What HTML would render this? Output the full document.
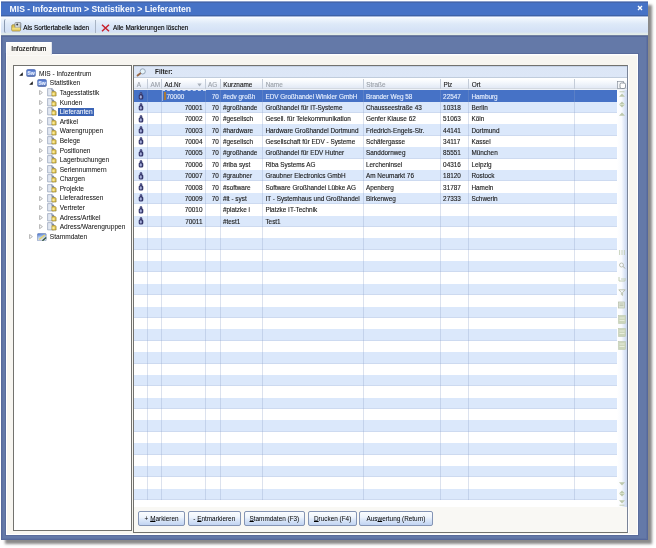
<!DOCTYPE html>
<html><head><meta charset="utf-8"><title>MIS - Infozentrum</title>
<style>
*{margin:0;padding:0;box-sizing:border-box}
html,body{width:656px;height:548px;overflow:hidden;background:#fff}
body{position:relative;font-family:"Liberation Sans",sans-serif;font-size:6.4px;color:#000}
.a{position:absolute}
.t{position:absolute;white-space:nowrap;line-height:1;-webkit-text-stroke:0.12px currentColor}
#win{position:absolute;left:1px;top:1px;width:647px;height:538.5px;background:#6479a8;box-shadow:inset 0 0 0 1px #56689a,inset 0 0 0 2px #5e72a2,3.5px 3.5px 2.5px rgba(60,60,60,.6)}
#title{left:0;top:0;width:647px;height:16px;background:linear-gradient(#8a9ecb 0,#8a9ecb 1px,#4466ac 1px,#4466ac 2px,#4672c6 2px,#4672c6 14px,#3e62a6 14px,#3e62a6 15px,#a4b6da 15px)}
#tbar{left:0;top:16px;width:647px;height:19px;background:linear-gradient(#fdfeff 0,#f0f6fd 1.5px,#dde9f8 7px,#d3e0f5 15px,#e4ede8 17px,#e4ede8 17.5px,#7080a0 18px)}
#panel{left:6px;top:54px;width:632px;height:481px;box-shadow:0 0 0 1px #5a6c9c;background:linear-gradient(#fcfbf9 0,#f7f5f0 1.5px);border-top:1px solid #fff;border-left:1px solid #fff;border-right:1px solid #fff;border-bottom:1px solid #fff}
#tree{left:13px;top:65px;width:119px;height:466px;background:#fff;border:1px solid #72726e}
#gp{left:133px;top:65px;width:495px;height:468px;background:#f9f8f4;border:1px solid #72726e;border-right-color:#7a8498;box-shadow:1px 0 0 #fff}
.row{position:absolute;left:0;height:11.4px}
.btn{position:absolute;top:511px;height:15px;border:1px solid #8494b4;border-radius:2px;background:linear-gradient(#fbfdff 0,#eef4fc 40%,#dae6f8 62%,#c2d4f2 100%);color:#000;text-align:center}
.btn span{position:absolute;left:0;right:0;top:4.1px;line-height:1}
u{text-decoration:underline;text-decoration-thickness:0.5px;text-underline-offset:0.4px}
</style></head><body style="will-change:transform">
<div id="win">
<div id="title" class="a"></div>
<div class="t" style="left:8.6px;top:3.8px;font-size:8.6px;font-weight:bold;color:#f8faff;-webkit-text-stroke:0">MIS - Infozentrum &gt; Statistiken &gt; Lieferanten</div>
<svg class="a" style="left:636px;top:4.3px" width="6" height="6" viewBox="0 0 6 6"><path d="M1 1L5 5M5 1L1 5" stroke="#fff" stroke-width="1.4"/></svg>
<div id="tbar" class="a"></div>
</div>

<div class="a" style="left:4px;top:19.3px;width:2px;height:14px;border-left:1px solid #8a9ab0;border-top-left-radius:2px;border-bottom-left-radius:2px"></div>
<svg class="a" style="left:11px;top:21.8px" width="11" height="10" viewBox="0 0 11 10">
<defs><linearGradient id="tby" x1="0" y1="0" x2="0" y2="1"><stop offset="0" stop-color="#e6cc58"/><stop offset="1" stop-color="#d0b038"/></linearGradient><linearGradient id="tbd" x1="0" y1="0" x2="1" y2="1"><stop offset="0" stop-color="#ffffff"/><stop offset="1" stop-color="#a8b0b4"/></linearGradient></defs>
<rect x="0.8" y="2.8" width="8.6" height="6.2" rx="0.9" fill="url(#tby)" stroke="#8c7a30" stroke-width="0.7"/>
<rect x="4" y="0.6" width="5.8" height="5.4" rx="0.6" fill="url(#tbd)" stroke="#687078" stroke-width="0.7"/>
<circle cx="6.2" cy="2.6" r="1" fill="#2c3438"/>
<path d="M1.2 5.6H9V8.6H1.2Z" fill="#f2de7c"/>
<path d="M1.2 8.2H9" stroke="#c0a040" stroke-width="0.6"/>
</svg>
<div class="t" style="left:23.3px;top:24.6px">Als Sortiertabelle laden</div>
<div class="a" style="left:95px;top:19.5px;width:1px;height:13.5px;background:#a8b4c4"></div>
<svg class="a" style="left:100.5px;top:23.5px" width="9" height="8" viewBox="0 0 9 8"><path d="M1 0.8L8 7.2M8 0.8L1 7.2" stroke="#c8202a" stroke-width="1.5"/></svg>
<div class="t" style="left:113px;top:24.6px">Alle Markierungen löschen</div>

<div id="panel" class="a"></div>
<div class="a" style="left:1px;top:36px;width:647px;height:1px;background:#56689a"></div>
<div class="a" style="left:6px;top:42px;width:46px;height:13px;background:linear-gradient(#fdfdfb,#f7f5f0);border-top:1px solid #fff;border-left:1px solid #fff;border-right:1px solid #e0e4ec;border-top-left-radius:1px;border-top-right-radius:1px"></div>
<div class="t" style="left:11.3px;top:46px;font-size:6.65px">Infozentrum</div>

<div id="tree" class="a"></div>
<svg class="a" style="left:19.4px;top:71.7px" width="4" height="4" viewBox="0 0 4 4"><path d="M3.8 0.2V3.8H0.2Z" fill="#1c1c1c"/></svg>
<svg class="a" style="left:26.2px;top:69.4px" width="10" height="8" viewBox="0 0 10 8"><defs><linearGradient id="gm0" x1="0" y1="0" x2="0" y2="1"><stop offset="0" stop-color="#3e62c0"/><stop offset="0.5" stop-color="#88a8e4"/><stop offset="1" stop-color="#4a64a8"/></linearGradient></defs><rect x="0.3" y="0.3" width="9.4" height="7.4" rx="2.2" fill="url(#gm0)" stroke="#5a70a8" stroke-width="0.5"/><text x="1.4" y="6.1" font-size="5" font-family="Liberation Sans" font-weight="bold" fill="#eef2ff">Sw</text></svg>
<div class="t" style="left:38.9px;top:70.9px;font-size:6.6px;color:#111;-webkit-text-stroke:0.03px #111">MIS - Infozentrum</div>
<svg class="a" style="left:29.3px;top:81.28px" width="4" height="4" viewBox="0 0 4 4"><path d="M3.8 0.2V3.8H0.2Z" fill="#1c1c1c"/></svg>
<svg class="a" style="left:36.6px;top:78.98px" width="10" height="8" viewBox="0 0 10 8"><defs><linearGradient id="gm1" x1="0" y1="0" x2="0" y2="1"><stop offset="0" stop-color="#3e62c0"/><stop offset="0.5" stop-color="#88a8e4"/><stop offset="1" stop-color="#4a64a8"/></linearGradient></defs><rect x="0.3" y="0.3" width="9.4" height="7.4" rx="2.2" fill="url(#gm1)" stroke="#5a70a8" stroke-width="0.5"/><text x="1.4" y="6.1" font-size="5" font-family="Liberation Sans" font-weight="bold" fill="#eef2ff">Sw</text></svg>
<div class="t" style="left:49.8px;top:80.48px;font-size:6.6px;color:#111;-webkit-text-stroke:0.03px #111">Statistiken</div>
<svg class="a" style="left:39.3px;top:90.26px" width="4" height="5.2" viewBox="0 0 4 5.2"><path d="M0.6 0.5L3.4 2.6L0.6 4.7Z" fill="#fff" stroke="#9a9a9a" stroke-width="0.75"/></svg>
<svg class="a" style="left:46.8px;top:88.26px" width="10" height="9" viewBox="0 0 10 9"><path d="M0.6 0.6H5L6.9 2.4V7.9H0.6Z" fill="#e2e8f2" stroke="#94a0b8" stroke-width="0.7"/><path d="M4.9 0.6V2.5H6.9" fill="none" stroke="#5c6888" stroke-width="0.7"/><path d="M4.9 3.5H8.1L9.1 4.4V8H4.9Z" fill="#e0c04c" stroke="#8c7a30" stroke-width="0.6"/><path d="M5.4 4.8H7.6V7.2H5.4Z" fill="#f8ea98"/></svg>
<div class="t" style="left:59.7px;top:90.06px;font-size:6.6px;color:#111;-webkit-text-stroke:0.03px #111">Tagesstatistik</div>
<svg class="a" style="left:39.3px;top:99.84px" width="4" height="5.2" viewBox="0 0 4 5.2"><path d="M0.6 0.5L3.4 2.6L0.6 4.7Z" fill="#fff" stroke="#9a9a9a" stroke-width="0.75"/></svg>
<svg class="a" style="left:46.8px;top:97.84px" width="10" height="9" viewBox="0 0 10 9"><path d="M0.6 0.6H5L6.9 2.4V7.9H0.6Z" fill="#e2e8f2" stroke="#94a0b8" stroke-width="0.7"/><path d="M4.9 0.6V2.5H6.9" fill="none" stroke="#5c6888" stroke-width="0.7"/><path d="M4.9 3.5H8.1L9.1 4.4V8H4.9Z" fill="#e0c04c" stroke="#8c7a30" stroke-width="0.6"/><path d="M5.4 4.8H7.6V7.2H5.4Z" fill="#f8ea98"/></svg>
<div class="t" style="left:59.7px;top:99.64px;font-size:6.6px;color:#111;-webkit-text-stroke:0.03px #111">Kunden</div>
<svg class="a" style="left:39.3px;top:109.42px" width="4" height="5.2" viewBox="0 0 4 5.2"><path d="M0.6 0.5L3.4 2.6L0.6 4.7Z" fill="#fff" stroke="#9a9a9a" stroke-width="0.75"/></svg>
<svg class="a" style="left:46.8px;top:107.42px" width="10" height="9" viewBox="0 0 10 9"><path d="M0.6 0.6H5L6.9 2.4V7.9H0.6Z" fill="#e2e8f2" stroke="#94a0b8" stroke-width="0.7"/><path d="M4.9 0.6V2.5H6.9" fill="none" stroke="#5c6888" stroke-width="0.7"/><path d="M4.9 3.5H8.1L9.1 4.4V8H4.9Z" fill="#e0c04c" stroke="#8c7a30" stroke-width="0.6"/><path d="M5.4 4.8H7.6V7.2H5.4Z" fill="#f8ea98"/></svg>
<div class="a" style="left:58.3px;top:107.62px;width:36.2px;height:8.4px;background:#3b64b6"></div>
<div class="t" style="left:59.7px;top:109.22px;font-size:6.6px;color:#fff;-webkit-text-stroke:0.03px #fff">Lieferanten</div>
<svg class="a" style="left:39.3px;top:119px" width="4" height="5.2" viewBox="0 0 4 5.2"><path d="M0.6 0.5L3.4 2.6L0.6 4.7Z" fill="#fff" stroke="#9a9a9a" stroke-width="0.75"/></svg>
<svg class="a" style="left:46.8px;top:117px" width="10" height="9" viewBox="0 0 10 9"><path d="M0.6 0.6H5L6.9 2.4V7.9H0.6Z" fill="#e2e8f2" stroke="#94a0b8" stroke-width="0.7"/><path d="M4.9 0.6V2.5H6.9" fill="none" stroke="#5c6888" stroke-width="0.7"/><path d="M4.9 3.5H8.1L9.1 4.4V8H4.9Z" fill="#e0c04c" stroke="#8c7a30" stroke-width="0.6"/><path d="M5.4 4.8H7.6V7.2H5.4Z" fill="#f8ea98"/></svg>
<div class="t" style="left:59.7px;top:118.8px;font-size:6.6px;color:#111;-webkit-text-stroke:0.03px #111">Artikel</div>
<svg class="a" style="left:39.3px;top:128.58px" width="4" height="5.2" viewBox="0 0 4 5.2"><path d="M0.6 0.5L3.4 2.6L0.6 4.7Z" fill="#fff" stroke="#9a9a9a" stroke-width="0.75"/></svg>
<svg class="a" style="left:46.8px;top:126.58px" width="10" height="9" viewBox="0 0 10 9"><path d="M0.6 0.6H5L6.9 2.4V7.9H0.6Z" fill="#e2e8f2" stroke="#94a0b8" stroke-width="0.7"/><path d="M4.9 0.6V2.5H6.9" fill="none" stroke="#5c6888" stroke-width="0.7"/><path d="M4.9 3.5H8.1L9.1 4.4V8H4.9Z" fill="#e0c04c" stroke="#8c7a30" stroke-width="0.6"/><path d="M5.4 4.8H7.6V7.2H5.4Z" fill="#f8ea98"/></svg>
<div class="t" style="left:59.7px;top:128.38px;font-size:6.6px;color:#111;-webkit-text-stroke:0.03px #111">Warengruppen</div>
<svg class="a" style="left:39.3px;top:138.16px" width="4" height="5.2" viewBox="0 0 4 5.2"><path d="M0.6 0.5L3.4 2.6L0.6 4.7Z" fill="#fff" stroke="#9a9a9a" stroke-width="0.75"/></svg>
<svg class="a" style="left:46.8px;top:136.16px" width="10" height="9" viewBox="0 0 10 9"><path d="M0.6 0.6H5L6.9 2.4V7.9H0.6Z" fill="#e2e8f2" stroke="#94a0b8" stroke-width="0.7"/><path d="M4.9 0.6V2.5H6.9" fill="none" stroke="#5c6888" stroke-width="0.7"/><path d="M4.9 3.5H8.1L9.1 4.4V8H4.9Z" fill="#e0c04c" stroke="#8c7a30" stroke-width="0.6"/><path d="M5.4 4.8H7.6V7.2H5.4Z" fill="#f8ea98"/></svg>
<div class="t" style="left:59.7px;top:137.96px;font-size:6.6px;color:#111;-webkit-text-stroke:0.03px #111">Belege</div>
<svg class="a" style="left:39.3px;top:147.74px" width="4" height="5.2" viewBox="0 0 4 5.2"><path d="M0.6 0.5L3.4 2.6L0.6 4.7Z" fill="#fff" stroke="#9a9a9a" stroke-width="0.75"/></svg>
<svg class="a" style="left:46.8px;top:145.74px" width="10" height="9" viewBox="0 0 10 9"><path d="M0.6 0.6H5L6.9 2.4V7.9H0.6Z" fill="#e2e8f2" stroke="#94a0b8" stroke-width="0.7"/><path d="M4.9 0.6V2.5H6.9" fill="none" stroke="#5c6888" stroke-width="0.7"/><path d="M4.9 3.5H8.1L9.1 4.4V8H4.9Z" fill="#e0c04c" stroke="#8c7a30" stroke-width="0.6"/><path d="M5.4 4.8H7.6V7.2H5.4Z" fill="#f8ea98"/></svg>
<div class="t" style="left:59.7px;top:147.54px;font-size:6.6px;color:#111;-webkit-text-stroke:0.03px #111">Positionen</div>
<svg class="a" style="left:39.3px;top:157.32px" width="4" height="5.2" viewBox="0 0 4 5.2"><path d="M0.6 0.5L3.4 2.6L0.6 4.7Z" fill="#fff" stroke="#9a9a9a" stroke-width="0.75"/></svg>
<svg class="a" style="left:46.8px;top:155.32px" width="10" height="9" viewBox="0 0 10 9"><path d="M0.6 0.6H5L6.9 2.4V7.9H0.6Z" fill="#e2e8f2" stroke="#94a0b8" stroke-width="0.7"/><path d="M4.9 0.6V2.5H6.9" fill="none" stroke="#5c6888" stroke-width="0.7"/><path d="M4.9 3.5H8.1L9.1 4.4V8H4.9Z" fill="#e0c04c" stroke="#8c7a30" stroke-width="0.6"/><path d="M5.4 4.8H7.6V7.2H5.4Z" fill="#f8ea98"/></svg>
<div class="t" style="left:59.7px;top:157.12px;font-size:6.6px;color:#111;-webkit-text-stroke:0.03px #111">Lagerbuchungen</div>
<svg class="a" style="left:39.3px;top:166.9px" width="4" height="5.2" viewBox="0 0 4 5.2"><path d="M0.6 0.5L3.4 2.6L0.6 4.7Z" fill="#fff" stroke="#9a9a9a" stroke-width="0.75"/></svg>
<svg class="a" style="left:46.8px;top:164.9px" width="10" height="9" viewBox="0 0 10 9"><path d="M0.6 0.6H5L6.9 2.4V7.9H0.6Z" fill="#e2e8f2" stroke="#94a0b8" stroke-width="0.7"/><path d="M4.9 0.6V2.5H6.9" fill="none" stroke="#5c6888" stroke-width="0.7"/><path d="M4.9 3.5H8.1L9.1 4.4V8H4.9Z" fill="#e0c04c" stroke="#8c7a30" stroke-width="0.6"/><path d="M5.4 4.8H7.6V7.2H5.4Z" fill="#f8ea98"/></svg>
<div class="t" style="left:59.7px;top:166.7px;font-size:6.6px;color:#111;-webkit-text-stroke:0.03px #111">Seriennummern</div>
<svg class="a" style="left:39.3px;top:176.48px" width="4" height="5.2" viewBox="0 0 4 5.2"><path d="M0.6 0.5L3.4 2.6L0.6 4.7Z" fill="#fff" stroke="#9a9a9a" stroke-width="0.75"/></svg>
<svg class="a" style="left:46.8px;top:174.48px" width="10" height="9" viewBox="0 0 10 9"><path d="M0.6 0.6H5L6.9 2.4V7.9H0.6Z" fill="#e2e8f2" stroke="#94a0b8" stroke-width="0.7"/><path d="M4.9 0.6V2.5H6.9" fill="none" stroke="#5c6888" stroke-width="0.7"/><path d="M4.9 3.5H8.1L9.1 4.4V8H4.9Z" fill="#e0c04c" stroke="#8c7a30" stroke-width="0.6"/><path d="M5.4 4.8H7.6V7.2H5.4Z" fill="#f8ea98"/></svg>
<div class="t" style="left:59.7px;top:176.28px;font-size:6.6px;color:#111;-webkit-text-stroke:0.03px #111">Chargen</div>
<svg class="a" style="left:39.3px;top:186.06px" width="4" height="5.2" viewBox="0 0 4 5.2"><path d="M0.6 0.5L3.4 2.6L0.6 4.7Z" fill="#fff" stroke="#9a9a9a" stroke-width="0.75"/></svg>
<svg class="a" style="left:46.8px;top:184.06px" width="10" height="9" viewBox="0 0 10 9"><path d="M0.6 0.6H5L6.9 2.4V7.9H0.6Z" fill="#e2e8f2" stroke="#94a0b8" stroke-width="0.7"/><path d="M4.9 0.6V2.5H6.9" fill="none" stroke="#5c6888" stroke-width="0.7"/><path d="M4.9 3.5H8.1L9.1 4.4V8H4.9Z" fill="#e0c04c" stroke="#8c7a30" stroke-width="0.6"/><path d="M5.4 4.8H7.6V7.2H5.4Z" fill="#f8ea98"/></svg>
<div class="t" style="left:59.7px;top:185.86px;font-size:6.6px;color:#111;-webkit-text-stroke:0.03px #111">Projekte</div>
<svg class="a" style="left:39.3px;top:195.64px" width="4" height="5.2" viewBox="0 0 4 5.2"><path d="M0.6 0.5L3.4 2.6L0.6 4.7Z" fill="#fff" stroke="#9a9a9a" stroke-width="0.75"/></svg>
<svg class="a" style="left:46.8px;top:193.64px" width="10" height="9" viewBox="0 0 10 9"><path d="M0.6 0.6H5L6.9 2.4V7.9H0.6Z" fill="#e2e8f2" stroke="#94a0b8" stroke-width="0.7"/><path d="M4.9 0.6V2.5H6.9" fill="none" stroke="#5c6888" stroke-width="0.7"/><path d="M4.9 3.5H8.1L9.1 4.4V8H4.9Z" fill="#e0c04c" stroke="#8c7a30" stroke-width="0.6"/><path d="M5.4 4.8H7.6V7.2H5.4Z" fill="#f8ea98"/></svg>
<div class="t" style="left:59.7px;top:195.44px;font-size:6.6px;color:#111;-webkit-text-stroke:0.03px #111">Lieferadressen</div>
<svg class="a" style="left:39.3px;top:205.22px" width="4" height="5.2" viewBox="0 0 4 5.2"><path d="M0.6 0.5L3.4 2.6L0.6 4.7Z" fill="#fff" stroke="#9a9a9a" stroke-width="0.75"/></svg>
<svg class="a" style="left:46.8px;top:203.22px" width="10" height="9" viewBox="0 0 10 9"><path d="M0.6 0.6H5L6.9 2.4V7.9H0.6Z" fill="#e2e8f2" stroke="#94a0b8" stroke-width="0.7"/><path d="M4.9 0.6V2.5H6.9" fill="none" stroke="#5c6888" stroke-width="0.7"/><path d="M4.9 3.5H8.1L9.1 4.4V8H4.9Z" fill="#e0c04c" stroke="#8c7a30" stroke-width="0.6"/><path d="M5.4 4.8H7.6V7.2H5.4Z" fill="#f8ea98"/></svg>
<div class="t" style="left:59.7px;top:205.02px;font-size:6.6px;color:#111;-webkit-text-stroke:0.03px #111">Vertreter</div>
<svg class="a" style="left:39.3px;top:214.8px" width="4" height="5.2" viewBox="0 0 4 5.2"><path d="M0.6 0.5L3.4 2.6L0.6 4.7Z" fill="#fff" stroke="#9a9a9a" stroke-width="0.75"/></svg>
<svg class="a" style="left:46.8px;top:212.8px" width="10" height="9" viewBox="0 0 10 9"><path d="M0.6 0.6H5L6.9 2.4V7.9H0.6Z" fill="#e2e8f2" stroke="#94a0b8" stroke-width="0.7"/><path d="M4.9 0.6V2.5H6.9" fill="none" stroke="#5c6888" stroke-width="0.7"/><path d="M4.9 3.5H8.1L9.1 4.4V8H4.9Z" fill="#e0c04c" stroke="#8c7a30" stroke-width="0.6"/><path d="M5.4 4.8H7.6V7.2H5.4Z" fill="#f8ea98"/></svg>
<div class="t" style="left:59.7px;top:214.6px;font-size:6.6px;color:#111;-webkit-text-stroke:0.03px #111">Adress/Artikel</div>
<svg class="a" style="left:39.3px;top:224.38px" width="4" height="5.2" viewBox="0 0 4 5.2"><path d="M0.6 0.5L3.4 2.6L0.6 4.7Z" fill="#fff" stroke="#9a9a9a" stroke-width="0.75"/></svg>
<svg class="a" style="left:46.8px;top:222.38px" width="10" height="9" viewBox="0 0 10 9"><path d="M0.6 0.6H5L6.9 2.4V7.9H0.6Z" fill="#e2e8f2" stroke="#94a0b8" stroke-width="0.7"/><path d="M4.9 0.6V2.5H6.9" fill="none" stroke="#5c6888" stroke-width="0.7"/><path d="M4.9 3.5H8.1L9.1 4.4V8H4.9Z" fill="#e0c04c" stroke="#8c7a30" stroke-width="0.6"/><path d="M5.4 4.8H7.6V7.2H5.4Z" fill="#f8ea98"/></svg>
<div class="t" style="left:59.7px;top:224.18px;font-size:6.6px;color:#111;-webkit-text-stroke:0.03px #111">Adress/Warengruppen</div>
<svg class="a" style="left:28.9px;top:233.96px" width="4" height="5.2" viewBox="0 0 4 5.2"><path d="M0.6 0.5L3.4 2.6L0.6 4.7Z" fill="#fff" stroke="#9a9a9a" stroke-width="0.75"/></svg>
<svg class="a" style="left:36.8px;top:232.56px" width="10" height="8.5" viewBox="0 0 10 8.5"><defs><linearGradient id="gst" x1="0" y1="0" x2="0.3" y2="1"><stop offset="0" stop-color="#3a6ad0"/><stop offset="0.55" stop-color="#b8cce8"/><stop offset="1" stop-color="#e4e8f0"/></linearGradient></defs><rect x="0.4" y="0.5" width="8.8" height="7.4" rx="1" fill="url(#gst)" stroke="#6078a8" stroke-width="0.5"/><path d="M2.2 6.6L7.8 2" stroke="#e6d46a" stroke-width="1.3"/><path d="M5.4 7.8L9.2 4.6" stroke="#2c5038" stroke-width="1.3"/></svg>
<div class="t" style="left:49.8px;top:233.76px;font-size:6.6px;color:#111;-webkit-text-stroke:0.03px #111">Stammdaten</div>
<div id="gp" class="a"></div>
<div class="a" style="left:134px;top:66px;width:493px;height:441px;background:#fff;border-right:1px solid #98acd4"></div>
<div class="a" style="left:134px;top:66px;width:493px;height:12px;background:linear-gradient(#c6d2e6 0,#c6d2e6 1px,#dce6f6 1px,#dde7f7 11px,#c0ccdc 11px)"></div>
<svg class="a" style="left:136px;top:67.5px" width="10" height="9" viewBox="0 0 10 9"><circle cx="6.7" cy="3.4" r="2.6" fill="#e6f4fa" stroke="#8c9cb0" stroke-width="0.9"/><path d="M1.6 7.6L4.2 5.4" stroke="#9a6a48" stroke-width="1.9" stroke-linecap="round"/></svg>
<div class="t" style="left:155px;top:69.2px;font-weight:bold;color:#222;-webkit-text-stroke:0">Filter:</div>
<div class="a" style="left:134px;top:78px;width:493px;height:12.3px;background:linear-gradient(#ffffff 0,#ffffff 1px,#f6f9fd 4px,#e2e9f5 10px,#d4dae2 10.5px,#d4dae2 11px,#eef2f8 11.3px)"></div>
<div class="t" style="left:136.8px;top:82.1px;color:#9ca2aa">A</div>
<div class="t" style="left:150.4px;top:82.1px;color:#9ca2aa">AM</div>
<div class="t" style="left:164.5px;top:82.1px;color:#1a1a1a">Ad.Nr</div>
<div class="t" style="left:208.1px;top:82.1px;color:#9ca2aa">AG</div>
<div class="t" style="left:223.2px;top:82.1px;color:#1a1a1a">Kurzname</div>
<div class="t" style="left:265.7px;top:82.1px;color:#9ca2aa">Name</div>
<div class="t" style="left:366.3px;top:82.1px;color:#9ca2aa">Straße</div>
<div class="t" style="left:443.4px;top:82.1px;color:#1a1a1a">Plz</div>
<div class="t" style="left:471.7px;top:82.1px;color:#1a1a1a">Ort</div>
<div class="a" style="left:147.1px;top:79px;width:1px;height:10px;background:#c4ccd8"></div>
<div class="a" style="left:161.2px;top:79px;width:1px;height:10px;background:#c4ccd8"></div>
<div class="a" style="left:204.8px;top:79px;width:1px;height:10px;background:#c4ccd8"></div>
<div class="a" style="left:219.9px;top:79px;width:1px;height:10px;background:#c4ccd8"></div>
<div class="a" style="left:262.4px;top:79px;width:1px;height:10px;background:#c4ccd8"></div>
<div class="a" style="left:363px;top:79px;width:1px;height:10px;background:#c4ccd8"></div>
<div class="a" style="left:440.1px;top:79px;width:1px;height:10px;background:#c4ccd8"></div>
<div class="a" style="left:468.4px;top:79px;width:1px;height:10px;background:#c4ccd8"></div>
<div class="a" style="left:573.9px;top:79px;width:1px;height:10px;background:#c4ccd8"></div>
<svg class="a" style="left:197px;top:82.5px" width="5" height="4" viewBox="0 0 5 4"><path d="M0.3 0.5H4.7L2.5 3.6Z" fill="#a8b0ba"/></svg>
<svg class="a" style="left:617px;top:80.5px" width="9" height="8" viewBox="0 0 9 8"><rect x="0.5" y="0.5" width="6" height="7" fill="#f4f6f8" stroke="#7c8490" stroke-width="0.6"/><rect x="3" y="2" width="5.5" height="5.5" rx="1.5" fill="#fff" stroke="#6c7480" stroke-width="0.7"/></svg>
<div class="row" style="left:134px;top:90.3px;width:483px;height:11.41px;background:#4672c6"></div>
<div class="row" style="left:134px;top:101.69px;width:483px;height:11.41px;background:#dbe8fb;border-bottom:1px solid #cddaf0"></div>
<div class="row" style="left:134px;top:113.07px;width:483px;height:11.41px;background:#ffffff"></div>
<div class="row" style="left:134px;top:124.46px;width:483px;height:11.41px;background:#dbe8fb;border-bottom:1px solid #cddaf0"></div>
<div class="row" style="left:134px;top:135.84px;width:483px;height:11.41px;background:#ffffff"></div>
<div class="row" style="left:134px;top:147.23px;width:483px;height:11.41px;background:#dbe8fb;border-bottom:1px solid #cddaf0"></div>
<div class="row" style="left:134px;top:158.62px;width:483px;height:11.41px;background:#ffffff"></div>
<div class="row" style="left:134px;top:170px;width:483px;height:11.41px;background:#dbe8fb;border-bottom:1px solid #cddaf0"></div>
<div class="row" style="left:134px;top:181.39px;width:483px;height:11.41px;background:#ffffff"></div>
<div class="row" style="left:134px;top:192.77px;width:483px;height:11.41px;background:#dbe8fb;border-bottom:1px solid #cddaf0"></div>
<div class="row" style="left:134px;top:204.16px;width:483px;height:11.41px;background:#ffffff"></div>
<div class="row" style="left:134px;top:215.55px;width:483px;height:11.41px;background:#dbe8fb;border-bottom:1px solid #cddaf0"></div>
<div class="row" style="left:134px;top:226.93px;width:483px;height:11.41px;background:#ffffff"></div>
<div class="row" style="left:134px;top:238.32px;width:483px;height:11.41px;background:#dbe8fb;border-bottom:1px solid #cddaf0"></div>
<div class="row" style="left:134px;top:249.7px;width:483px;height:11.41px;background:#ffffff"></div>
<div class="row" style="left:134px;top:261.09px;width:483px;height:11.41px;background:#dbe8fb;border-bottom:1px solid #cddaf0"></div>
<div class="row" style="left:134px;top:272.48px;width:483px;height:11.41px;background:#ffffff"></div>
<div class="row" style="left:134px;top:283.86px;width:483px;height:11.41px;background:#dbe8fb;border-bottom:1px solid #cddaf0"></div>
<div class="row" style="left:134px;top:295.25px;width:483px;height:11.41px;background:#ffffff"></div>
<div class="row" style="left:134px;top:306.63px;width:483px;height:11.41px;background:#dbe8fb;border-bottom:1px solid #cddaf0"></div>
<div class="row" style="left:134px;top:318.02px;width:483px;height:11.41px;background:#ffffff"></div>
<div class="row" style="left:134px;top:329.41px;width:483px;height:11.41px;background:#dbe8fb;border-bottom:1px solid #cddaf0"></div>
<div class="row" style="left:134px;top:340.79px;width:483px;height:11.41px;background:#ffffff"></div>
<div class="row" style="left:134px;top:352.18px;width:483px;height:11.41px;background:#dbe8fb;border-bottom:1px solid #cddaf0"></div>
<div class="row" style="left:134px;top:363.56px;width:483px;height:11.41px;background:#ffffff"></div>
<div class="row" style="left:134px;top:374.95px;width:483px;height:11.41px;background:#dbe8fb;border-bottom:1px solid #cddaf0"></div>
<div class="row" style="left:134px;top:386.34px;width:483px;height:11.41px;background:#ffffff"></div>
<div class="row" style="left:134px;top:397.72px;width:483px;height:11.41px;background:#dbe8fb;border-bottom:1px solid #cddaf0"></div>
<div class="row" style="left:134px;top:409.11px;width:483px;height:11.41px;background:#ffffff"></div>
<div class="row" style="left:134px;top:420.49px;width:483px;height:11.41px;background:#dbe8fb;border-bottom:1px solid #cddaf0"></div>
<div class="row" style="left:134px;top:431.88px;width:483px;height:11.41px;background:#ffffff"></div>
<div class="row" style="left:134px;top:443.27px;width:483px;height:11.41px;background:#dbe8fb;border-bottom:1px solid #cddaf0"></div>
<div class="row" style="left:134px;top:454.65px;width:483px;height:11.41px;background:#ffffff"></div>
<div class="row" style="left:134px;top:466.04px;width:483px;height:11.41px;background:#dbe8fb;border-bottom:1px solid #cddaf0"></div>
<div class="row" style="left:134px;top:477.42px;width:483px;height:11.41px;background:#ffffff"></div>
<div class="row" style="left:134px;top:488.81px;width:483px;height:11.41px;background:#dbe8fb;border-bottom:1px solid #cddaf0"></div>
<div class="a" style="left:147.1px;top:90.3px;width:1px;height:409.9px;background:rgba(140,160,200,.3)"></div>
<div class="a" style="left:161.2px;top:90.3px;width:1px;height:409.9px;background:rgba(140,160,200,.3)"></div>
<div class="a" style="left:204.8px;top:90.3px;width:1px;height:409.9px;background:rgba(140,160,200,.3)"></div>
<div class="a" style="left:219.9px;top:90.3px;width:1px;height:409.9px;background:rgba(140,160,200,.3)"></div>
<div class="a" style="left:262.4px;top:90.3px;width:1px;height:409.9px;background:rgba(140,160,200,.3)"></div>
<div class="a" style="left:363px;top:90.3px;width:1px;height:409.9px;background:rgba(140,160,200,.3)"></div>
<div class="a" style="left:440.1px;top:90.3px;width:1px;height:409.9px;background:rgba(140,160,200,.3)"></div>
<div class="a" style="left:468.4px;top:90.3px;width:1px;height:409.9px;background:rgba(140,160,200,.3)"></div>
<div class="a" style="left:573.9px;top:90.3px;width:1px;height:409.9px;background:rgba(140,160,200,.3)"></div>
<svg class="a" style="left:138px;top:91.9px" width="6" height="8" viewBox="0 0 6 8"><rect x="1.7" y="0.3" width="2.6" height="2.8" rx="1.1" fill="#34366a"/><rect x="0.7" y="2.2" width="4.6" height="5.3" rx="1.6" fill="#34366a"/><ellipse cx="2.8" cy="4.9" rx="1.1" ry="1.6" fill="#a4acd8"/><rect x="2.3" y="0.9" width="1.2" height="1" fill="#6a70a8"/></svg>
<div class="t" style="left:166.5px;top:93.5px;color:#e8f0ff">70000</div>
<div class="t" style="left:205.3px;width:13.5px;text-align:right;top:93.5px;color:#e8f0ff">70</div>
<div class="t" style="left:222.9px;top:93.5px;color:#e8f0ff">#edv großh</div>
<div class="t" style="left:265.4px;top:93.5px;color:#e8f0ff">EDV Großhandel Winkler GmbH</div>
<div class="t" style="left:366px;top:93.5px;color:#e8f0ff">Brander Weg 58</div>
<div class="t" style="left:443.1px;top:93.5px;color:#e8f0ff">22547</div>
<div class="t" style="left:471.4px;top:93.5px;color:#e8f0ff">Hamburg</div>
<svg class="a" style="left:138px;top:103.29px" width="6" height="8" viewBox="0 0 6 8"><rect x="1.7" y="0.3" width="2.6" height="2.8" rx="1.1" fill="#34366a"/><rect x="0.7" y="2.2" width="4.6" height="5.3" rx="1.6" fill="#34366a"/><ellipse cx="2.8" cy="4.9" rx="1.1" ry="1.6" fill="#a4acd8"/><rect x="2.3" y="0.9" width="1.2" height="1" fill="#6a70a8"/></svg>
<div class="t" style="left:161.7px;width:40.8px;text-align:right;top:104.89px;color:#1a1a1a">70001</div>
<div class="t" style="left:205.3px;width:13.5px;text-align:right;top:104.89px;color:#1a1a1a">70</div>
<div class="t" style="left:222.9px;top:104.89px;color:#1a1a1a">#großhande</div>
<div class="t" style="left:265.4px;top:104.89px;color:#1a1a1a">Großhandel für IT-Systeme</div>
<div class="t" style="left:366px;top:104.89px;color:#1a1a1a">Chausseestraße 43</div>
<div class="t" style="left:443.1px;top:104.89px;color:#1a1a1a">10318</div>
<div class="t" style="left:471.4px;top:104.89px;color:#1a1a1a">Berlin</div>
<svg class="a" style="left:138px;top:114.67px" width="6" height="8" viewBox="0 0 6 8"><rect x="1.7" y="0.3" width="2.6" height="2.8" rx="1.1" fill="#34366a"/><rect x="0.7" y="2.2" width="4.6" height="5.3" rx="1.6" fill="#34366a"/><ellipse cx="2.8" cy="4.9" rx="1.1" ry="1.6" fill="#a4acd8"/><rect x="2.3" y="0.9" width="1.2" height="1" fill="#6a70a8"/></svg>
<div class="t" style="left:161.7px;width:40.8px;text-align:right;top:116.27px;color:#1a1a1a">70002</div>
<div class="t" style="left:205.3px;width:13.5px;text-align:right;top:116.27px;color:#1a1a1a">70</div>
<div class="t" style="left:222.9px;top:116.27px;color:#1a1a1a">#gesellsch</div>
<div class="t" style="left:265.4px;top:116.27px;color:#1a1a1a">Gesell. für Telekommunikation</div>
<div class="t" style="left:366px;top:116.27px;color:#1a1a1a">Genfer Klause 62</div>
<div class="t" style="left:443.1px;top:116.27px;color:#1a1a1a">51063</div>
<div class="t" style="left:471.4px;top:116.27px;color:#1a1a1a">Köln</div>
<svg class="a" style="left:138px;top:126.06px" width="6" height="8" viewBox="0 0 6 8"><rect x="1.7" y="0.3" width="2.6" height="2.8" rx="1.1" fill="#34366a"/><rect x="0.7" y="2.2" width="4.6" height="5.3" rx="1.6" fill="#34366a"/><ellipse cx="2.8" cy="4.9" rx="1.1" ry="1.6" fill="#a4acd8"/><rect x="2.3" y="0.9" width="1.2" height="1" fill="#6a70a8"/></svg>
<div class="t" style="left:161.7px;width:40.8px;text-align:right;top:127.66px;color:#1a1a1a">70003</div>
<div class="t" style="left:205.3px;width:13.5px;text-align:right;top:127.66px;color:#1a1a1a">70</div>
<div class="t" style="left:222.9px;top:127.66px;color:#1a1a1a">#hardware</div>
<div class="t" style="left:265.4px;top:127.66px;color:#1a1a1a">Hardware Großhandel Dortmund</div>
<div class="t" style="left:366px;top:127.66px;color:#1a1a1a">Friedrich-Engels-Str.</div>
<div class="t" style="left:443.1px;top:127.66px;color:#1a1a1a">44141</div>
<div class="t" style="left:471.4px;top:127.66px;color:#1a1a1a">Dortmund</div>
<svg class="a" style="left:138px;top:137.44px" width="6" height="8" viewBox="0 0 6 8"><rect x="1.7" y="0.3" width="2.6" height="2.8" rx="1.1" fill="#34366a"/><rect x="0.7" y="2.2" width="4.6" height="5.3" rx="1.6" fill="#34366a"/><ellipse cx="2.8" cy="4.9" rx="1.1" ry="1.6" fill="#a4acd8"/><rect x="2.3" y="0.9" width="1.2" height="1" fill="#6a70a8"/></svg>
<div class="t" style="left:161.7px;width:40.8px;text-align:right;top:139.04px;color:#1a1a1a">70004</div>
<div class="t" style="left:205.3px;width:13.5px;text-align:right;top:139.04px;color:#1a1a1a">70</div>
<div class="t" style="left:222.9px;top:139.04px;color:#1a1a1a">#gesellsch</div>
<div class="t" style="left:265.4px;top:139.04px;color:#1a1a1a">Gesellschaft für EDV - Systeme</div>
<div class="t" style="left:366px;top:139.04px;color:#1a1a1a">Schäfergasse</div>
<div class="t" style="left:443.1px;top:139.04px;color:#1a1a1a">34117</div>
<div class="t" style="left:471.4px;top:139.04px;color:#1a1a1a">Kassel</div>
<svg class="a" style="left:138px;top:148.83px" width="6" height="8" viewBox="0 0 6 8"><rect x="1.7" y="0.3" width="2.6" height="2.8" rx="1.1" fill="#34366a"/><rect x="0.7" y="2.2" width="4.6" height="5.3" rx="1.6" fill="#34366a"/><ellipse cx="2.8" cy="4.9" rx="1.1" ry="1.6" fill="#a4acd8"/><rect x="2.3" y="0.9" width="1.2" height="1" fill="#6a70a8"/></svg>
<div class="t" style="left:161.7px;width:40.8px;text-align:right;top:150.43px;color:#1a1a1a">70005</div>
<div class="t" style="left:205.3px;width:13.5px;text-align:right;top:150.43px;color:#1a1a1a">70</div>
<div class="t" style="left:222.9px;top:150.43px;color:#1a1a1a">#großhande</div>
<div class="t" style="left:265.4px;top:150.43px;color:#1a1a1a">Großhandel für EDV Hutner</div>
<div class="t" style="left:366px;top:150.43px;color:#1a1a1a">Sanddornweg</div>
<div class="t" style="left:443.1px;top:150.43px;color:#1a1a1a">85551</div>
<div class="t" style="left:471.4px;top:150.43px;color:#1a1a1a">München</div>
<svg class="a" style="left:138px;top:160.22px" width="6" height="8" viewBox="0 0 6 8"><rect x="1.7" y="0.3" width="2.6" height="2.8" rx="1.1" fill="#34366a"/><rect x="0.7" y="2.2" width="4.6" height="5.3" rx="1.6" fill="#34366a"/><ellipse cx="2.8" cy="4.9" rx="1.1" ry="1.6" fill="#a4acd8"/><rect x="2.3" y="0.9" width="1.2" height="1" fill="#6a70a8"/></svg>
<div class="t" style="left:161.7px;width:40.8px;text-align:right;top:161.82px;color:#1a1a1a">70006</div>
<div class="t" style="left:205.3px;width:13.5px;text-align:right;top:161.82px;color:#1a1a1a">70</div>
<div class="t" style="left:222.9px;top:161.82px;color:#1a1a1a">#riba syst</div>
<div class="t" style="left:265.4px;top:161.82px;color:#1a1a1a">Riba Systems AG</div>
<div class="t" style="left:366px;top:161.82px;color:#1a1a1a">Lercheninsel</div>
<div class="t" style="left:443.1px;top:161.82px;color:#1a1a1a">04316</div>
<div class="t" style="left:471.4px;top:161.82px;color:#1a1a1a">Leipzig</div>
<svg class="a" style="left:138px;top:171.6px" width="6" height="8" viewBox="0 0 6 8"><rect x="1.7" y="0.3" width="2.6" height="2.8" rx="1.1" fill="#34366a"/><rect x="0.7" y="2.2" width="4.6" height="5.3" rx="1.6" fill="#34366a"/><ellipse cx="2.8" cy="4.9" rx="1.1" ry="1.6" fill="#a4acd8"/><rect x="2.3" y="0.9" width="1.2" height="1" fill="#6a70a8"/></svg>
<div class="t" style="left:161.7px;width:40.8px;text-align:right;top:173.2px;color:#1a1a1a">70007</div>
<div class="t" style="left:205.3px;width:13.5px;text-align:right;top:173.2px;color:#1a1a1a">70</div>
<div class="t" style="left:222.9px;top:173.2px;color:#1a1a1a">#graubner</div>
<div class="t" style="left:265.4px;top:173.2px;color:#1a1a1a">Graubner Electronics GmbH</div>
<div class="t" style="left:366px;top:173.2px;color:#1a1a1a">Am Neumarkt 76</div>
<div class="t" style="left:443.1px;top:173.2px;color:#1a1a1a">18120</div>
<div class="t" style="left:471.4px;top:173.2px;color:#1a1a1a">Rostock</div>
<svg class="a" style="left:138px;top:182.99px" width="6" height="8" viewBox="0 0 6 8"><rect x="1.7" y="0.3" width="2.6" height="2.8" rx="1.1" fill="#34366a"/><rect x="0.7" y="2.2" width="4.6" height="5.3" rx="1.6" fill="#34366a"/><ellipse cx="2.8" cy="4.9" rx="1.1" ry="1.6" fill="#a4acd8"/><rect x="2.3" y="0.9" width="1.2" height="1" fill="#6a70a8"/></svg>
<div class="t" style="left:161.7px;width:40.8px;text-align:right;top:184.59px;color:#1a1a1a">70008</div>
<div class="t" style="left:205.3px;width:13.5px;text-align:right;top:184.59px;color:#1a1a1a">70</div>
<div class="t" style="left:222.9px;top:184.59px;color:#1a1a1a">#software</div>
<div class="t" style="left:265.4px;top:184.59px;color:#1a1a1a">Software Großhandel Lübke AG</div>
<div class="t" style="left:366px;top:184.59px;color:#1a1a1a">Apenberg</div>
<div class="t" style="left:443.1px;top:184.59px;color:#1a1a1a">31787</div>
<div class="t" style="left:471.4px;top:184.59px;color:#1a1a1a">Hameln</div>
<svg class="a" style="left:138px;top:194.37px" width="6" height="8" viewBox="0 0 6 8"><rect x="1.7" y="0.3" width="2.6" height="2.8" rx="1.1" fill="#34366a"/><rect x="0.7" y="2.2" width="4.6" height="5.3" rx="1.6" fill="#34366a"/><ellipse cx="2.8" cy="4.9" rx="1.1" ry="1.6" fill="#a4acd8"/><rect x="2.3" y="0.9" width="1.2" height="1" fill="#6a70a8"/></svg>
<div class="t" style="left:161.7px;width:40.8px;text-align:right;top:195.97px;color:#1a1a1a">70009</div>
<div class="t" style="left:205.3px;width:13.5px;text-align:right;top:195.97px;color:#1a1a1a">70</div>
<div class="t" style="left:222.9px;top:195.97px;color:#1a1a1a">#it - syst</div>
<div class="t" style="left:265.4px;top:195.97px;color:#1a1a1a">IT - Systemhaus und Großhandel</div>
<div class="t" style="left:366px;top:195.97px;color:#1a1a1a">Birkenweg</div>
<div class="t" style="left:443.1px;top:195.97px;color:#1a1a1a">27333</div>
<div class="t" style="left:471.4px;top:195.97px;color:#1a1a1a">Schwerin</div>
<svg class="a" style="left:138px;top:205.76px" width="6" height="8" viewBox="0 0 6 8"><rect x="1.7" y="0.3" width="2.6" height="2.8" rx="1.1" fill="#34366a"/><rect x="0.7" y="2.2" width="4.6" height="5.3" rx="1.6" fill="#34366a"/><ellipse cx="2.8" cy="4.9" rx="1.1" ry="1.6" fill="#a4acd8"/><rect x="2.3" y="0.9" width="1.2" height="1" fill="#6a70a8"/></svg>
<div class="t" style="left:161.7px;width:40.8px;text-align:right;top:207.36px;color:#1a1a1a">70010</div>
<div class="t" style="left:222.9px;top:207.36px;color:#1a1a1a">#platzke i</div>
<div class="t" style="left:265.4px;top:207.36px;color:#1a1a1a">Platzke IT-Technik</div>
<svg class="a" style="left:138px;top:217.15px" width="6" height="8" viewBox="0 0 6 8"><rect x="1.7" y="0.3" width="2.6" height="2.8" rx="1.1" fill="#34366a"/><rect x="0.7" y="2.2" width="4.6" height="5.3" rx="1.6" fill="#34366a"/><ellipse cx="2.8" cy="4.9" rx="1.1" ry="1.6" fill="#a4acd8"/><rect x="2.3" y="0.9" width="1.2" height="1" fill="#6a70a8"/></svg>
<div class="t" style="left:161.7px;width:40.8px;text-align:right;top:218.75px;color:#1a1a1a">70011</div>
<div class="t" style="left:222.9px;top:218.75px;color:#1a1a1a">#test1</div>
<div class="t" style="left:265.4px;top:218.75px;color:#1a1a1a">Test1</div>
<div class="a" style="left:162px;top:90px;width:43.5px;height:11px;border-top:1px dashed rgba(225,235,255,.85);border-left:1px solid rgba(200,218,250,.6)"></div>
<div class="a" style="left:164.3px;top:92.3px;width:1.5px;height:7.5px;background:#a87838"></div>
<div class="a" style="left:617px;top:90px;width:9.5px;height:417px;background:linear-gradient(90deg,#ffffff 0,#f8fafe 45%,#c8d6f0 100%)"></div>
<svg class="a" style="left:618px;top:91.2px" width="8" height="7" viewBox="0 0 8 7"><path d="M1.5 0.8H6.5" stroke="#bcc8ac" stroke-width="0.9"/><path d="M1 5.8L4 2.4L7 5.8Z" fill="#bcc8ac"/></svg>
<svg class="a" style="left:618px;top:100.8px" width="8" height="7" viewBox="0 0 8 7"><path d="M4 0.5L7 3.5L4 6.5L1 3.5Z" fill="#bcc8ac"/><path d="M1 3.5H7" stroke="#e8f0e0" stroke-width="0.6"/></svg>
<svg class="a" style="left:618px;top:110.5px" width="8" height="6" viewBox="0 0 8 6"><path d="M1 4.8L4 1.6L7 4.8Z" fill="#bcc8ac"/></svg>
<svg class="a" style="left:618px;top:249.1px" width="8" height="7" viewBox="0 0 8 7"><path d="M1.6 1V6M4 1V6M6.4 1V6" stroke="#bcc8ac" stroke-width="0.8"/></svg>
<svg class="a" style="left:618px;top:261.7px" width="8" height="7" viewBox="0 0 8 7"><circle cx="3.5" cy="3" r="2" fill="none" stroke="#b8bcb0" stroke-width="0.9"/><path d="M5 4.5L7.4 6.6" stroke="#b0b4a8" stroke-width="1"/></svg>
<svg class="a" style="left:618px;top:275.4px" width="8" height="7" viewBox="0 0 8 7"><path d="M1 2V6H7V3" fill="none" stroke="#bcc8ac" stroke-width="0.9"/><path d="M3 4H6" stroke="#bcc8ac" stroke-width="0.8"/></svg>
<svg class="a" style="left:618px;top:288.5px" width="8" height="7" viewBox="0 0 8 7"><path d="M0.8 0.8H7.2L4.6 3.6V6.4L3.4 5.6V3.6Z" fill="none" stroke="#b0b8a0" stroke-width="0.8"/></svg>
<svg class="a" style="left:618px;top:301.3px" width="8" height="8" viewBox="0 0 8 8"><rect x="0.5" y="1" width="6" height="6" fill="#dfe6d8" stroke="#b4bca8" stroke-width="0.7"/><path d="M1.5 3H5.5M1.5 4.6H5.5" stroke="#a8b098" stroke-width="0.6"/></svg>
<svg class="a" style="left:618px;top:315.2px" width="8" height="9" viewBox="0 0 8 9"><rect x="0.5" y="0.5" width="7" height="8" fill="#ccd6bc" stroke="#b8c4a8" stroke-width="0.5"/><path d="M1.5 3H6.5M1.5 5.5H6.5" stroke="#eef2e6" stroke-width="0.8"/></svg>
<svg class="a" style="left:618px;top:327.8px" width="8" height="9" viewBox="0 0 8 9"><rect x="0.5" y="0.5" width="7" height="8" fill="#ccd6bc" stroke="#b8c4a8" stroke-width="0.5"/><path d="M1.5 3H6.5M1.5 5.5H6.5" stroke="#eef2e6" stroke-width="0.8"/></svg>
<svg class="a" style="left:618px;top:340.8px" width="8" height="9" viewBox="0 0 8 9"><rect x="0.5" y="0.5" width="7" height="8" fill="#ccd6bc" stroke="#b8c4a8" stroke-width="0.5"/><path d="M1.5 3H6.5M1.5 5.5H6.5" stroke="#eef2e6" stroke-width="0.8"/></svg>
<svg class="a" style="left:618px;top:481px" width="8" height="6" viewBox="0 0 8 6"><path d="M1 1.2L4 4.4L7 1.2Z" fill="#bcc8ac"/></svg>
<svg class="a" style="left:618px;top:489.5px" width="8" height="7" viewBox="0 0 8 7"><path d="M4 0.5L7 3.5L4 6.5L1 3.5Z" fill="#bcc8ac"/><path d="M1 3.5H7" stroke="#e8f0e0" stroke-width="0.6"/></svg>
<svg class="a" style="left:618px;top:498.5px" width="8" height="7" viewBox="0 0 8 7"><path d="M1 1.2L4 4.6L7 1.2Z" fill="#bcc8ac"/><path d="M1.5 6.2H6.5" stroke="#bcc8ac" stroke-width="0.9"/></svg>
<div class="btn" style="left:138.2px;width:46.8px"><span>+ <u>M</u>arkieren</span></div>
<div class="btn" style="left:187.5px;width:53.5px"><span>- <u>E</u>ntmarkieren</span></div>
<div class="btn" style="left:243.8px;width:61.2px"><span><u>S</u>tammdaten (F3)</span></div>
<div class="btn" style="left:308.1px;width:49.1px"><span><u>D</u>rucken (F4)</span></div>
<div class="btn" style="left:359.3px;width:73.4px"><span>Aus<u>w</u>ertung (Return)</span></div>
</body></html>
